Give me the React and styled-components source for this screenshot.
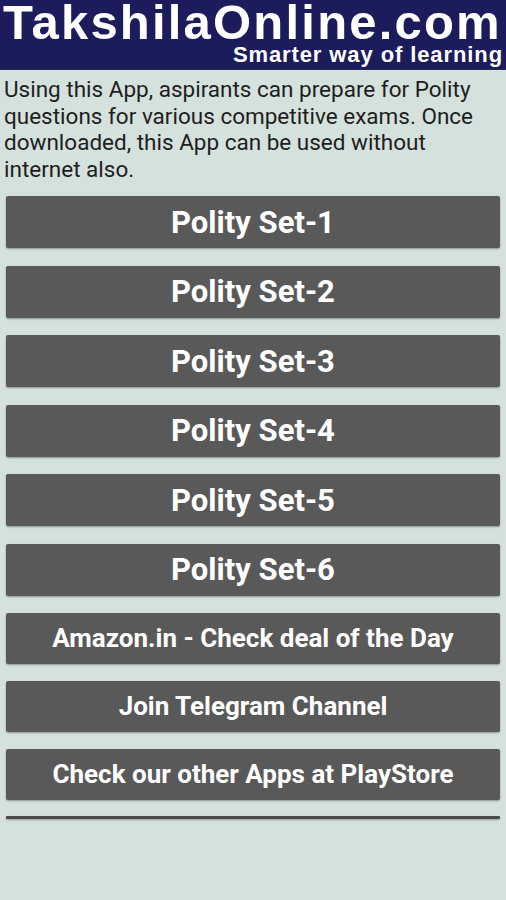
import React from "react";
import styled, { createGlobalStyle } from "styled-components";

const GlobalStyle = createGlobalStyle`
  html, body {
    margin: 0;
    padding: 0;
    background: #d4e1dc;
  }
  body {
    font-family: Roboto, "Noto Sans", sans-serif;
  }
`;

const Page = styled.div`
  width: 506px;
  min-height: 900px;
  background: #d4e1dc;
  display: flex;
  flex-direction: column;
`;

const Header = styled.div`
  height: 70px;
  background: #1c1c5c;
  display: flex;
  flex-direction: column;
  align-items: flex-end;
  padding: 0 3px 0 3px;
  box-sizing: border-box;
  border-bottom: 1px solid #2a2a50;
`;

const Logo = styled.div`
  width: 100%;
  font-family: "Liberation Sans", Arial, sans-serif;
  font-weight: 700;
  font-size: 49px;
  line-height: 44px;
  color: #ffffff;
  letter-spacing: 2.2px;
  white-space: nowrap;
`;

const Tagline = styled.div`
  font-family: "Liberation Sans", Arial, sans-serif;
  font-weight: 700;
  font-size: 22px;
  line-height: 22px;
  color: #ffffff;
  letter-spacing: 0.9px;
  white-space: nowrap;
`;

const Intro = styled.p`
  margin: 0;
  padding: 6px 8px 0 4px;
  font-size: 22.5px;
  line-height: 26.5px;
  color: #1e1e1e;
`;

const ButtonList = styled.div`
  display: flex;
  flex-direction: column;
  gap: ${(p) => p.gap}px;
  padding: 0 6px;
  margin-top: ${(p) => p.top}px;
`;

const Button = styled.button`
  height: ${(p) => (p.big ? 52 : 51)}px;
  width: 100%;
  border: none;
  border-radius: 2px;
  background: #595959;
  color: #ffffff;
  font-family: Roboto, "Noto Sans", sans-serif;
  font-weight: 700;
  font-size: ${(p) => (p.big ? 31 : 26)}px;
  box-shadow: 0 1px 2px rgba(0, 0, 0, 0.35);
  cursor: pointer;
  padding: 0;
`;

const Rule = styled.div`
  height: 3px;
  margin: 16px 6px 0 6px;
  background: #4a4a4a;
  border-radius: 1px;
  box-shadow: 0 1px 2px rgba(0, 0, 0, 0.3);
`;

const sets = [1, 2, 3, 4, 5, 6];
const links = [
  "Amazon.in - Check deal of the Day",
  "Join Telegram Channel",
  "Check our other Apps at PlayStore",
];

export default function App() {
  return (
    <Page>
      <GlobalStyle />
      <Header>
        <Logo>TakshilaOnline.com</Logo>
        <Tagline>Smarter way of learning</Tagline>
      </Header>
      <Intro>
        Using this App, aspirants can prepare for Polity questions for various
        competitive exams. Once downloaded, this App can be used without
        internet also.
      </Intro>
      <ButtonList gap={17.6} top={14}>
        {sets.map((n) => (
          <Button big key={n}>
            Polity Set-{n}
          </Button>
        ))}
      </ButtonList>
      <ButtonList gap={17} top={17}>
        {links.map((t) => (
          <Button key={t}>{t}</Button>
        ))}
      </ButtonList>
      <Rule />
    </Page>
  );
}
